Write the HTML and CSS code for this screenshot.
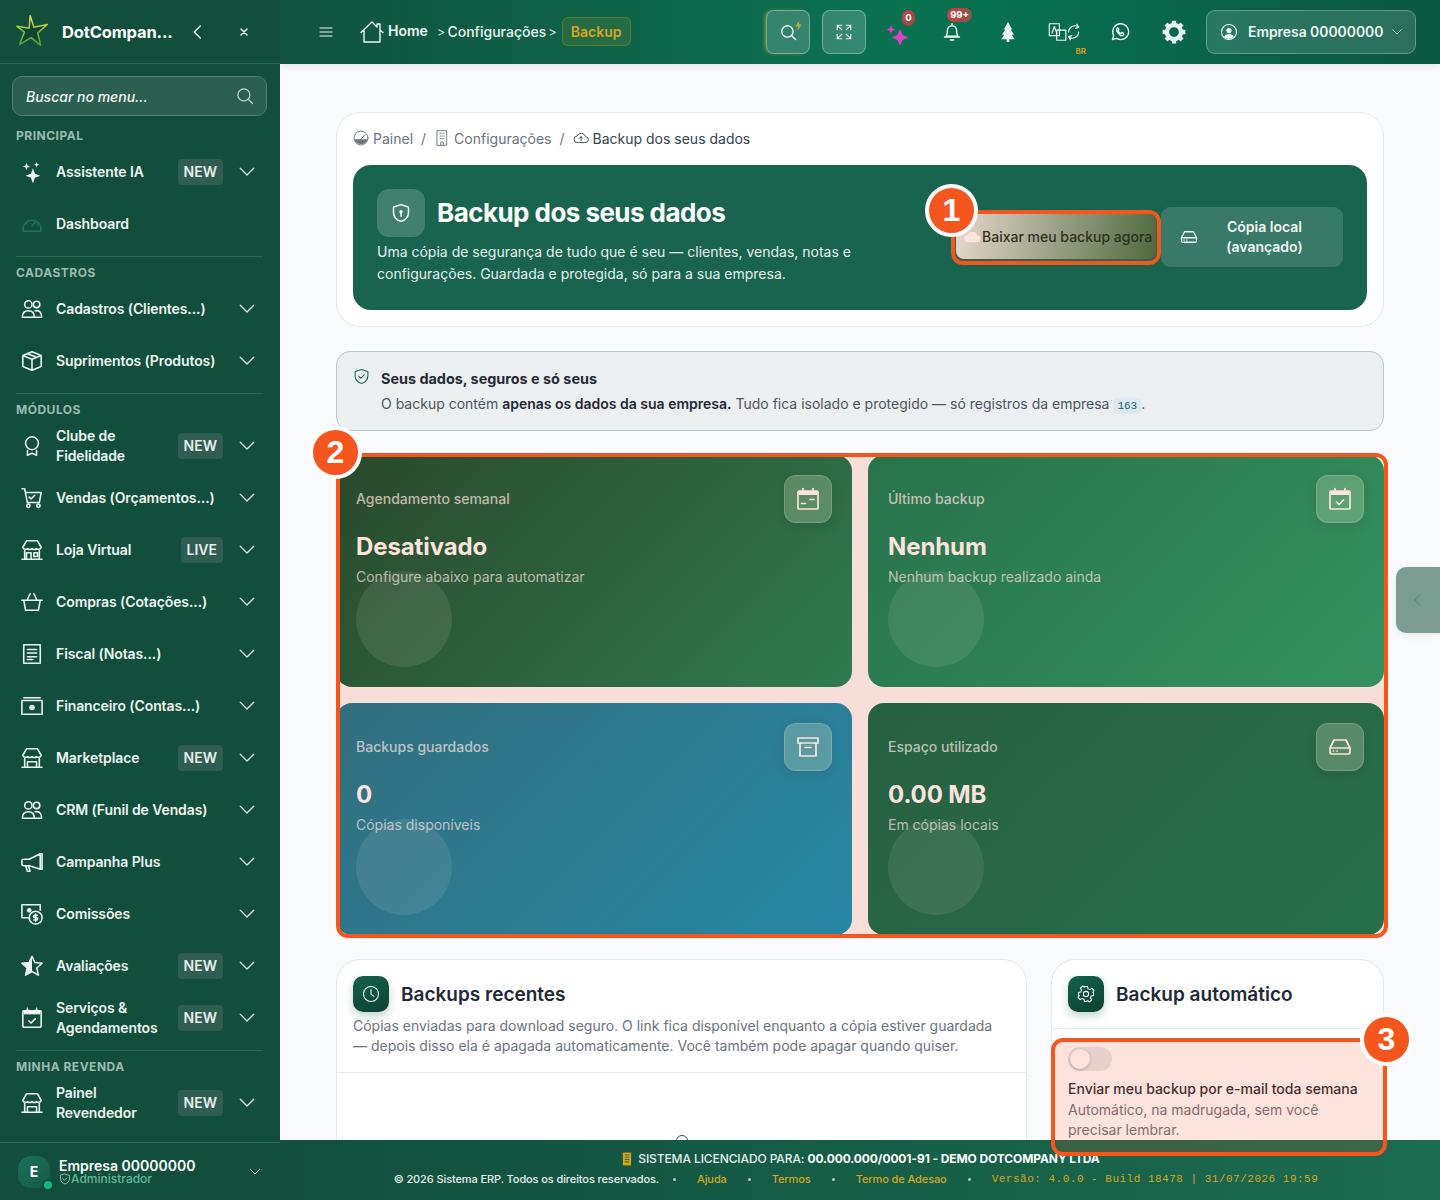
FILE: index.html
```html
<!DOCTYPE html>
<html lang="pt-BR">
<head>
  <meta charset="UTF-8">
  <title>Backup dos seus dados</title>
  <link rel="stylesheet" href="styles.css">
</head>
<body>
  <!-- icones usados no menu e nos cards -->
  <svg class="sprite" xmlns="http://www.w3.org/2000/svg">
    <symbol id="i-chev" viewBox="0 0 24 24"><path d="M3 7l9 9 9-9"/></symbol>
    <symbol id="i-spark" viewBox="0 0 24 24"><path class="solid" d="M13 8l2.200 6 5.800 2.200-5.800 2.200L13 24.500l-2.200-6.100L5 16.200l5.800-2.200zM6 2l1 3 3 1-3 1-1 3-1-3-3-1 3-1zM17 1l.8 2.200L20 4l-2.200.8L17 7l-.8-2.200L14 4l2.200-.8z"/></symbol>
    <symbol id="i-gauge" viewBox="0 0 24 24"><path d="M2 18a10 10 0 1 1 20 0c0 1.500-1 2-2 2H4c-1 0-2-.5-2-2zM12 14l4-4M6 12h.1M9 8.500h.1M15 8h.1M18 13h.1"/></symbol>
    <symbol id="i-people" viewBox="0 0 24 24"><circle cx="8" cy="7" r="4"/><circle cx="17" cy="7" r="3.500"/><path d="M1.500 21c0-5 3-7 6.500-7s6.500 2 6.500 7zM15.500 14c4-1 7 1.500 7 7h-8"/></symbol>
    <symbol id="i-box" viewBox="0 0 24 24"><path d="M12 2l10 4v12l-10 4-10-4V6zM2 6l10 4 10-4M12 10v12M7 4l10 4"/></symbol>
    <symbol id="i-award" viewBox="0 0 24 24"><circle cx="12" cy="9" r="7"/><path d="M7 17v5l5-2 5 2v-5"/></symbol>
    <symbol id="i-cart" viewBox="0 0 24 24"><path d="M1 2h3l3 15h13l2-11H5M9 11l2 2 4-4"/><circle cx="8" cy="20.500" r="1.800"/><circle cx="19" cy="20.500" r="1.800"/></symbol>
    <symbol id="i-shopwin" viewBox="0 0 24 24"><path d="M6 2h12l4 7a3 3 0 0 1-5 1.500 3.500 3.500 0 0 1-5 0 3.500 3.500 0 0 1-5 0A3 3 0 0 1 2 9zM4 12v10h16V12M1 22h22M6 15h5v7H6zM14 15h4v4h-4z"/></symbol>
    <symbol id="i-basket" viewBox="0 0 24 24"><path d="M1 10h22M3 10l2 11h14l2-11M7 9l3-6M17 9l-3-6"/></symbol>
    <symbol id="i-receipt" viewBox="0 0 24 24"><path d="M3 2h18v20H3zM7 7h10M7 11h10M7 15h10M7 18h6"/></symbol>
    <symbol id="i-cash" viewBox="0 0 24 24"><path d="M3 3h18M1 6h22v15H1z"/><circle class="solid" cx="12" cy="13.500" r="3"/></symbol>
    <symbol id="i-shop" viewBox="0 0 24 24"><path d="M6 2h12l4 7a3 3 0 0 1-5 1.500 3.500 3.500 0 0 1-5 0 3.500 3.500 0 0 1-5 0A3 3 0 0 1 2 9zM4 12v10h16V12M1 22h22M7 16h10v6H7z"/></symbol>
    <symbol id="i-mega" viewBox="0 0 24 24"><path d="M21 3v17L9 16H3a2 2 0 0 1-2-2v-3a2 2 0 0 1 2-2h6zM21 3h2v17h-2M5 16l2 6h3l-2-6"/></symbol>
    <symbol id="i-coin" viewBox="0 0 24 24"><path d="M9 16H1V2h20v6"/><circle class="solid" cx="9" cy="8" r="2.500"/><circle cx="16" cy="16" r="7"/><path d="M18 13.500h-3a1.200 1.200 0 0 0 0 2.500h2a1.200 1.200 0 0 1 0 2.500h-3M16 12v8"/></symbol>
    <symbol id="i-star" viewBox="0 0 24 24"><path d="M12 1.500l3.200 6.700L23 9l-5.800 5.200L19 22l-7-4-7 4 1.800-7.800L1 9l7.800-.8z"/><path class="solid" d="M12 1.500v16.500l-7 4 1.800-7.800L1 9l7.800-.8z"/></symbol>
    <symbol id="i-calcheck" viewBox="0 0 24 24"><path d="M3 4h18a1 1 0 0 1 1 1v16a1 1 0 0 1-1 1H3a1 1 0 0 1-1-1V5a1 1 0 0 1 1-1zM7 1.500V4M17 1.500V4M8.500 15l2.500 2.500 4.500-4.500"/><path class="solid" d="M3 4h18v4H3z"/></symbol>
    <symbol id="i-caldots" viewBox="0 0 24 24"><path d="M3 4h18a1 1 0 0 1 1 1v16a1 1 0 0 1-1 1H3a1 1 0 0 1-1-1V5a1 1 0 0 1 1-1zM7 1.500V4M17 1.500V4M5.500 16.500h4M14 12.500h4"/><path class="solid" d="M3 4h18v4H3z"/></symbol>
    <symbol id="i-archive" viewBox="0 0 24 24"><path d="M2 3h20v5H2zM4 8v13h16V8M9 12.500h6"/></symbol>
    <symbol id="i-drive" viewBox="0 0 24 24"><path d="M6 5h12l4 8v4a2 2 0 0 1-2 2H4a2 2 0 0 1-2-2v-4zM2 13h20M5.500 16h.1M9 16h.1"/></symbol>
    <symbol id="i-search" viewBox="0 0 24 24"><circle cx="10.500" cy="10.500" r="8"/><path d="M16.500 16.500L22 22"/></symbol>
    <symbol id="i-shield" viewBox="0 0 24 24"><path d="M12 2l9 3v6c0 6-4 9.500-9 11-5-1.500-9-5-9-11V5zM8 11.500l3 3 5-5"/></symbol>
    <symbol id="i-clock" viewBox="0 0 24 24"><circle cx="12" cy="12" r="10"/><path d="M12 6v6.500l4 2.500"/></symbol>
    <symbol id="i-gear" viewBox="0 0 24 24"><circle cx="12" cy="12" r="3.500"/><path d="M10 2h4l.7 3 2.500 1.100 2.600-1.600 2.800 2.800-1.600 2.600L22 10v4l-3 .7-1 2.500 1.600 2.600-2.800 2.800-2.600-1.600-2.100.9L10 22l-.7-3-2.500-1.100-2.600 1.600-2.800-2.800 1.600-2.600L2 14V10l3-.7 1.100-2.500-1.600-2.600 2.800-2.800 2.600 1.600z"/></symbol>
  </svg>

  <div class="app">
    <aside class="sidebar">
      <div class="side-head">
        <svg class="logo" viewBox="0 0 40 40">
          <defs>
            <linearGradient id="starGrad" x1="0" y1="0" x2="0" y2="1">
              <stop offset="0" stop-color="#e8e23a"/>
              <stop offset="1" stop-color="#4f9a3a"/>
            </linearGradient>
          </defs>
          <path d="M17 3l4 12 14-3-10 9 3 13-10-8-12 7 5-13L3 14l13 2z" fill="#0f4434" stroke="url(#starGrad)" stroke-width="1.600"/>
        </svg>
        <span class="brand">DotCompan...</span>
        <svg class="head-btn" viewBox="0 0 24 24"><path d="M15 4l-8 8 8 8"/></svg>
        <svg class="head-close" viewBox="0 0 24 24"><path d="M6 6l12 12M18 6L6 18"/></svg>
      </div>

      <div class="side-search">
        <span>Buscar no menu...</span>
        <svg class="ico"><use href="#i-search"/></svg>
      </div>

      <nav class="menu">
        <div class="menu-label">PRINCIPAL</div>
        <a class="item"><svg class="ico"><use href="#i-spark"/></svg><span class="name">Assistente IA</span><b class="tag">NEW</b><svg class="chev"><use href="#i-chev"/></svg></a>
        <a class="item"><svg class="ico dim"><use href="#i-gauge"/></svg><span class="name">Dashboard</span></a>

        <div class="menu-sep"></div>
        <div class="menu-label">CADASTROS</div>
        <a class="item"><svg class="ico"><use href="#i-people"/></svg><span class="name">Cadastros (Clientes...)</span><svg class="chev"><use href="#i-chev"/></svg></a>
        <a class="item"><svg class="ico"><use href="#i-box"/></svg><span class="name">Suprimentos (Produtos)</span><svg class="chev"><use href="#i-chev"/></svg></a>

        <div class="menu-sep"></div>
        <div class="menu-label">MÓDULOS</div>
        <a class="item"><svg class="ico"><use href="#i-award"/></svg><span class="name">Clube de<br>Fidelidade</span><b class="tag">NEW</b><svg class="chev"><use href="#i-chev"/></svg></a>
        <a class="item"><svg class="ico"><use href="#i-cart"/></svg><span class="name">Vendas (Orçamentos...)</span><svg class="chev"><use href="#i-chev"/></svg></a>
        <a class="item"><svg class="ico"><use href="#i-shopwin"/></svg><span class="name">Loja Virtual</span><b class="tag">LIVE</b><svg class="chev"><use href="#i-chev"/></svg></a>
        <a class="item"><svg class="ico"><use href="#i-basket"/></svg><span class="name">Compras (Cotações...)</span><svg class="chev"><use href="#i-chev"/></svg></a>
        <a class="item"><svg class="ico"><use href="#i-receipt"/></svg><span class="name">Fiscal (Notas...)</span><svg class="chev"><use href="#i-chev"/></svg></a>
        <a class="item"><svg class="ico"><use href="#i-cash"/></svg><span class="name">Financeiro (Contas...)</span><svg class="chev"><use href="#i-chev"/></svg></a>
        <a class="item"><svg class="ico"><use href="#i-shop"/></svg><span class="name">Marketplace</span><b class="tag">NEW</b><svg class="chev"><use href="#i-chev"/></svg></a>
        <a class="item"><svg class="ico"><use href="#i-people"/></svg><span class="name">CRM (Funil de Vendas)</span><svg class="chev"><use href="#i-chev"/></svg></a>
        <a class="item"><svg class="ico"><use href="#i-mega"/></svg><span class="name">Campanha Plus</span><svg class="chev"><use href="#i-chev"/></svg></a>
        <a class="item"><svg class="ico"><use href="#i-coin"/></svg><span class="name">Comissões</span><svg class="chev"><use href="#i-chev"/></svg></a>
        <a class="item"><svg class="ico"><use href="#i-star"/></svg><span class="name">Avaliações</span><b class="tag">NEW</b><svg class="chev"><use href="#i-chev"/></svg></a>
        <a class="item"><svg class="ico"><use href="#i-calcheck"/></svg><span class="name">Serviços &amp;<br>Agendamentos</span><b class="tag">NEW</b><svg class="chev"><use href="#i-chev"/></svg></a>

        <div class="menu-sep"></div>
        <div class="menu-label">MINHA REVENDA</div>
        <a class="item"><svg class="ico"><use href="#i-shop"/></svg><span class="name">Painel<br>Revendedor</span><b class="tag">NEW</b><svg class="chev"><use href="#i-chev"/></svg></a>
      </nav>

      <div class="side-user">
        <div class="avatar">E<i class="online"></i></div>
        <div class="user-info">
          <strong>Empresa 00000000</strong>
          <small><svg viewBox="0 0 24 24"><use href="#i-shield"/></svg>Administrador</small>
        </div>
        <svg class="user-chev"><use href="#i-chev"/></svg>
      </div>
    </aside>

    <div class="main">
      <header class="topbar">
        <svg class="burger" viewBox="0 0 24 24"><path d="M3 6h18M3 12h18M3 18h18"/></svg>
        <div class="crumbs">
          <svg class="home" viewBox="0 0 24 24"><path d="M1 12.500L12 2l5 5V4h3v6l3 2.500M4 10v12h16V10"/></svg>
          <span class="crumb-home">Home</span>
          <span class="sep sep-a">&gt;</span>
          <span class="crumb-cfg">Configurações</span>
          <span class="sep">&gt;</span>
          <span class="chip">Backup</span>
        </div>
        <div class="top-right">
          <button class="tbtn tbtn-search"><svg class="ico"><use href="#i-search"/></svg><svg class="bolt" viewBox="0 0 24 24"><path d="M14 1L5 14h6l-1 9 9-13h-6z"/></svg></button>
          <button class="tbtn"><svg class="expand" viewBox="0 0 24 24"><path d="M3 9V3h6M3 3l6 6M21 9V3h-6M21 3l-6 6M3 15v6h6M3 21l6-6M21 15v6h-6M21 21l-6-6"/></svg></button>
          <div class="cell cell-s"><svg class="pink" viewBox="0 0 24 24"><path d="M14 9l2.500 6 6 2.500-6 2.500-2.500 6-2.500-6-6-2.500 6-2.500zM5 5l1.300 3.200L9.500 9.500 6.300 10.800 5 14 3.700 10.800.5 9.500l3.200-1.300z"/></svg><b class="count count-a">0</b></div>
          <div class="cell"><svg class="line" viewBox="0 0 24 24"><path d="M5 17c1-1.500 1.500-3 1.500-7a5.500 5.500 0 0 1 11 0c0 4 .5 5.500 1.500 7zM3 18h18M10 21.500h4M12 2v2"/></svg><b class="count count-b">99+</b></div>
          <div class="cell"><svg class="fill" viewBox="0 0 24 24"><path d="M12 1l4.500 8H15l3.500 6H16l3.500 5h-6v3h-3v-3h-6L8 15H5.500L9 9H7.500z"/></svg></div>
          <div class="cell"><svg class="trans" viewBox="0 0 36 24"><path d="M2 3h11v13H2zM10 10h10v11H10z"/><path d="M5 13l2.500-7 2.500 7M34 12a7 7 0 0 1-11 5.500M23 12a7 7 0 0 1 11-5.500M32 3.500l2 3.500-3.500 1M25 20.500l-2-3.500 3.500-1"/></svg><span class="lang">BR</span></div>
          <div class="cell"><svg class="line" viewBox="0 0 24 24"><path d="M3 21l1.500-5A9.500 9.500 0 1 1 8 19.700zM9 7.500c-1.500 1-1.500 3 .5 5.500s4.500 4 6 3c1-.7 1.300-1.800.7-2.300l-1.700-1c-.5-.2-1 .8-1.500 1-1 .1-3-2-3.200-3 .2-.5 1-1 .8-1.500l-.7-1.700c-.2-.5-.5-.5-.9-.5z"/></svg></div>
          <div class="cell cell-s"><svg class="big-gear" viewBox="0 0 24 24"><circle cx="12" cy="12" r="6.500"/><path d="M12 1.500v4M12 18.500v4M1.500 12h4M18.500 12h4M4.600 4.600l2.800 2.800M16.600 16.600l2.800 2.800M19.400 4.600l-2.800 2.800M7.400 16.600l-2.800 2.800"/></svg></div>
          <button class="company">
            <svg class="line" viewBox="0 0 24 24"><circle cx="12" cy="12" r="10"/><circle class="solid" cx="12" cy="10" r="3.500"/><path class="solid" d="M5.500 18.500c1-3 3.500-4 6.500-4s5.500 1 6.500 4c-1.500 1.500-4 2.500-6.500 2.500s-5-1-6.500-2.500z"/></svg>
            <span>Empresa 00000000</span>
            <svg class="comp-chev"><use href="#i-chev"/></svg>
          </button>
        </div>
      </header>

      <main class="content">
        <section class="panel top-panel">
          <div class="path">
            <svg class="path-ico" viewBox="0 0 24 24"><circle cx="12" cy="12" r="10.500"/><path class="solid" d="M2 14h20a10.500 10.500 0 0 1-20 0z"/><path d="M12 14l5-6"/></svg>
            <span>Painel</span><em>/</em>
            <svg class="path-ico" viewBox="0 0 24 24"><path d="M5 1h14v22H5zM9 5h2M13 5h2M9 9h2M13 9h2M9 13h2M13 13h2M10 23v-5h4v5"/></svg>
            <span>Configurações</span><em>/</em>
            <svg class="path-ico cur" viewBox="0 0 24 24"><path d="M7 19a5 5 0 0 1-1-10 7 7 0 0 1 13 1 4.500 4.500 0 0 1-1 9zM12 16v-6M9.500 12.500L12 10l2.500 2.500"/></svg>
            <span class="cur">Backup dos seus dados</span>
          </div>
          <div class="hero">
            <div class="hero-text">
              <div class="hero-title">
                <div class="hero-ico"><svg viewBox="0 0 24 24"><path d="M12 2l9 3v6c0 6-4 9.500-9 11-5-1.500-9-5-9-11V5z"/><circle class="solid" cx="12" cy="10.500" r="2"/><path d="M12 12v4"/></svg></div>
                <h1>Backup dos seus dados</h1>
              </div>
              <p>Uma cópia de segurança de tudo que é seu — clientes, vendas, notas e configurações. Guardada e protegida, só para a sua empresa.</p>
            </div>
            <div class="hero-actions">
              <button class="btn-main"><svg viewBox="0 0 24 24"><path class="solid" d="M7 19a5 5 0 0 1-1-10 7 7 0 0 1 13 1 4.500 4.500 0 0 1-1 9z"/></svg>Baixar meu backup agora</button>
              <button class="btn-alt"><svg><use href="#i-drive"/></svg><span>Cópia local (avançado)</span></button>
            </div>
          </div>
        </section>

        <section class="notice">
          <svg viewBox="0 0 24 24"><use href="#i-shield"/></svg>
          <div>
            <h4>Seus dados, seguros e só seus</h4>
            <p>O backup contém <strong>apenas os dados da sua empresa.</strong> Tudo fica isolado e protegido — só registros da empresa <code>163</code>.</p>
          </div>
        </section>

        <section class="stats">
          <div class="stat stat-a">
            <span class="stat-label">Agendamento semanal</span>
            <strong>Desativado</strong>
            <small>Configure abaixo para automatizar</small>
            <div class="stat-ico"><svg><use href="#i-caldots"/></svg></div>
          </div>
          <div class="stat stat-b">
            <span class="stat-label">Último backup</span>
            <strong>Nenhum</strong>
            <small>Nenhum backup realizado ainda</small>
            <div class="stat-ico"><svg><use href="#i-calcheck"/></svg></div>
          </div>
          <div class="stat stat-c">
            <span class="stat-label">Backups guardados</span>
            <strong>0</strong>
            <small>Cópias disponíveis</small>
            <div class="stat-ico"><svg><use href="#i-archive"/></svg></div>
          </div>
          <div class="stat stat-d">
            <span class="stat-label">Espaço utilizado</span>
            <strong>0.00 MB</strong>
            <small>Em cópias locais</small>
            <div class="stat-ico"><svg><use href="#i-drive"/></svg></div>
          </div>
        </section>

        <section class="lower">
          <div class="panel recent">
            <div class="panel-head">
              <div class="panel-ico"><svg><use href="#i-clock"/></svg></div>
              <h3>Backups recentes</h3>
            </div>
            <p class="panel-desc">Cópias enviadas para download seguro. O link fica disponível enquanto a cópia estiver guardada — depois disso ela é apagada automaticamente. Você também pode apagar quando quiser.</p>
            <div class="empty"><i></i></div>
          </div>
          <div class="panel auto">
            <div class="panel-head auto-head">
              <div class="panel-ico"><svg><use href="#i-gear"/></svg></div>
              <h3>Backup automático</h3>
            </div>
            <div class="auto-body">
              <div class="toggle"><i></i></div>
              <div class="auto-title">Enviar meu backup por e-mail toda semana</div>
              <div class="auto-sub">Automático, na madrugada, sem você precisar lembrar.</div>
            </div>
          </div>
        </section>
      </main>

      <footer class="foot">
        <div class="foot-line">
          <svg viewBox="0 0 24 24"><path class="solid" d="M5 1h14v22H5z"/><path class="holes" d="M9 5h2M13 5h2M9 9h2M13 9h2M9 13h2M13 13h2M9 17h6"/></svg>
          <span>SISTEMA LICENCIADO PARA: <strong>00.000.000/0001-91 - DEMO DOTCOMPANY LTDA</strong></span>
        </div>
        <div class="foot-sub">
          <span class="copy">© 2026 Sistema ERP. Todos os direitos reservados.</span><i></i>
          <a>Ajuda</a><i></i>
          <a>Termos</a><i></i>
          <a>Termo de Adesao</a><i></i>
          <code>Versão: 4.0.0 - Build 18478 | 31/07/2026 19:59</code>
        </div>
      </footer>
    </div>

    <!-- aba lateral e marcacoes por cima da tela -->
    <div class="side-tab"><svg viewBox="0 0 24 24"><path d="M15 4l-8 8 8 8"/></svg></div>
    <div class="mark mark-1"></div>
    <div class="mark mark-2"></div>
    <div class="mark mark-3"></div>
    <div class="pin pin-1">1</div>
    <div class="pin pin-2">2</div>
    <div class="pin pin-3">3</div>
  </div>
</body>
</html>
```

FILE: styles.css
```css
/* Base */
* {
  box-sizing: border-box;
  margin: 0;
  padding: 0;
}
body {
  font-family: Inter, "Liberation Sans", sans-serif;
  background: #f8fafc;
  color: #1f2937;
}
svg {
  fill: none;
  stroke: currentColor;
  stroke-width: 1.7;
  stroke-linecap: round;
  stroke-linejoin: round;
}
.solid {
  fill: currentColor;
  stroke: none;
}
.sprite {
  display: none;
}
.app {
  position: relative;
  display: grid;
  grid-template-columns: 280px 1fr;
  height: 1200px;
  overflow: hidden;
}

/* Sidebar */
.sidebar {
  display: flex;
  flex-direction: column;
  background: #114f3c;
  color: #eef5f1;
  z-index: 3;
}
.side-head {
  display: flex;
  align-items: center;
  height: 64px;
  padding-left: 14px;
  border-bottom: 1px solid rgba(255, 255, 255, 0.12);
}
.logo {
  width: 38px;
  height: 38px;
  stroke: none;
}
.brand {
  margin-left: 10px;
  width: 122px;
  font-size: 16.5px;
  font-weight: 700;
  letter-spacing: -0.15px;
  color: #fff;
}
.head-btn {
  width: 18px;
  height: 18px;
  stroke-width: 2;
  margin-left: 5px;
}
.head-close {
  width: 12px;
  height: 12px;
  stroke-width: 3;
  margin-left: 31px;
}
.side-search {
  display: flex;
  align-items: center;
  justify-content: space-between;
  height: 40px;
  margin: 12px 13px 4px 12px;
  padding: 0 12px 0 13px;
  background: #2b5f4f;
  border: 1px solid #53806f;
  border-radius: 10px;
  font-size: 14px;
  font-style: italic;
  font-weight: 500;
  color: #f2f7f4;
}
.side-search .ico {
  width: 18px;
  height: 18px;
  color: #c0d4cc;
}
.menu {
  flex: 1;
  padding-top: 6px;
}
.menu-label {
  padding: 1px 16px 0;
  height: 20px;
  font-size: 12px;
  line-height: 18px;
  font-weight: 700;
  letter-spacing: 0.5px;
  color: #9dbaae;
}
.menu-sep {
  height: 1px;
  margin: 6px 17px 6px 16px;
  background: rgba(255, 255, 255, 0.13);
}
.item {
  display: flex;
  align-items: center;
  height: 52px;
  padding: 0 24px 0 21px;
}
.ico {
  flex: none;
  width: 22px;
  height: 22px;
}
.ico.dim {
  color: #24705a;
}
.name {
  flex: 1;
  margin-left: 13px;
  font-size: 14px;
  line-height: 20px;
  font-weight: 600;
  letter-spacing: -0.1px;
  color: #eef5f1;
}
.tag {
  padding: 0 6px;
  height: 26px;
  line-height: 26px;
  background: #2f5d51;
  border-radius: 4px;
  font-size: 14px;
  font-weight: 600;
  color: #e6efeb;
}
.chev {
  flex: none;
  width: 18px;
  height: 18px;
  margin-left: 15px;
  stroke-width: 1.8;
  color: #d7e4de;
}
.side-user {
  display: flex;
  align-items: center;
  height: 58px;
  padding: 0 19px 0 18px;
  border-top: 1px solid rgba(255, 255, 255, 0.16);
}
.avatar {
  position: relative;
  width: 32px;
  height: 32px;
  border-radius: 13px;
  background: linear-gradient(135deg, #1d7158, #145a45);
  color: #fff;
  font-size: 14px;
  font-weight: 700;
  line-height: 32px;
  text-align: center;
}
.online {
  position: absolute;
  right: -2px;
  bottom: -1px;
  width: 8px;
  height: 8px;
  border-radius: 50%;
  background: #10b981;
  box-shadow: 0 0 0 2px #114f3c;
}
.user-info {
  flex: 1;
  margin-left: 9px;
}
.user-info strong {
  display: block;
  font-size: 14px;
  line-height: 14px;
  font-weight: 600;
  color: #fff;
}
.user-info small {
  display: flex;
  align-items: center;
  font-size: 12px;
  line-height: 12px;
  font-weight: 500;
  color: #63b898;
}
.user-info small svg {
  width: 12px;
  height: 12px;
  color: #a8cfc0;
}
.user-chev {
  width: 12px;
  height: 12px;
  stroke-width: 2;
}

/* Topo */
.main {
  display: flex;
  flex-direction: column;
  min-width: 0;
  height: 1200px;
}
.topbar {
  flex: none;
  display: flex;
  align-items: center;
  height: 64px;
  padding: 0 24px 0 38px;
  background: linear-gradient(90deg, #11533f 0%, #0a7050 50%, #07704f 62%, #0c5843 100%);
  color: #eef7f3;
  box-shadow: 0 2px 8px rgba(0, 0, 0, 0.1);
  z-index: 2;
}
.burger {
  width: 16px;
  height: 16px;
  stroke-width: 1.5;
}
.crumbs {
  display: flex;
  align-items: center;
  margin-left: 26px;
  margin-top: -1px;
  font-size: 14px;
  font-weight: 600;
}
.home {
  width: 24px;
  height: 24px;
  margin-right: 4px;
  stroke-width: 1.4;
}
.crumb-home {
  margin-top: -2px;
}
.crumb-cfg {
  font-weight: 500;
}
.sep {
  margin: 0 5px 0 2px;
  font-size: 13px;
  font-weight: 400;
  opacity: 0.85;
}
.sep-a {
  margin: 0 2px 0 9px;
}
.chip {
  padding: 0 8px;
  height: 29px;
  line-height: 27px;
  color: #d6a51f;
  background: rgba(214, 165, 31, 0.12);
  border: 1px solid rgba(214, 165, 31, 0.28);
  border-radius: 6px;
}
.top-right {
  display: flex;
  align-items: center;
  gap: 12px;
  margin-left: auto;
}
.tbtn {
  position: relative;
  display: flex;
  align-items: center;
  justify-content: center;
  width: 44px;
  height: 44px;
  background: rgba(255, 255, 255, 0.17);
  border: 1px solid rgba(255, 255, 255, 0.32);
  border-radius: 8px;
  color: #eef7f3;
}
.tbtn .ico {
  width: 17px;
  height: 17px;
  stroke-width: 2;
}
.tbtn-search {
  box-shadow: -2px 0 3px rgba(214, 180, 60, 0.4);
}
.bolt {
  position: absolute;
  top: 9px;
  right: 5px;
  width: 11px;
  height: 11px;
  fill: #c4a73a;
  stroke: none;
}
.expand {
  width: 18px;
  height: 18px;
  stroke-width: 1.5;
}
.cell {
  position: relative;
  display: flex;
  align-items: center;
  justify-content: center;
  width: 44px;
  height: 44px;
}
.cell-s {
  width: 40px;
}
.pink {
  width: 24px;
  height: 26px;
  fill: #dd3fc8;
  stroke: none;
}
.line {
  width: 20px;
  height: 20px;
}
.fill {
  width: 22px;
  height: 22px;
  fill: #e8f4ef;
  stroke: none;
}
.trans {
  width: 34px;
  height: 22px;
  stroke-width: 1.3;
}
.lang {
  position: absolute;
  right: 0;
  bottom: -2px;
  font-size: 8px;
  font-weight: 600;
  color: #d6a51f;
}
.big-gear {
  width: 26px;
  height: 26px;
  stroke: #e8f4ef;
  stroke-width: 4;
  stroke-linecap: butt;
}
.count {
  position: absolute;
  color: #fff;
  font-size: 9.5px;
  font-weight: 700;
  border-radius: 8px;
  text-align: center;
}
.count-a {
  top: 0;
  right: 3px;
  width: 13px;
  height: 16px;
  line-height: 16px;
  background: linear-gradient(135deg, #c94343, #8a4a45);
}
.count-b {
  top: -2px;
  right: 2px;
  padding: 0 3px;
  height: 14px;
  line-height: 14px;
  background: linear-gradient(90deg, #d13f3f, #7d5a4b);
}
.company {
  display: flex;
  align-items: center;
  width: 210px;
  height: 44px;
  padding: 0 12px 1px 13px;
  background: rgba(255, 255, 255, 0.13);
  border: 1px solid rgba(255, 255, 255, 0.28);
  border-radius: 9px;
  color: #eef7f3;
  font: 600 13.9px Inter, "Liberation Sans", sans-serif;
}
.company .line {
  width: 18px;
  height: 18px;
  stroke-width: 1.5;
}
.company span {
  flex: 1;
  margin-left: 10px;
  text-align: left;
  white-space: nowrap;
}
.comp-chev {
  width: 12px;
  height: 12px;
  color: #bcd3ca;
}

/* Conteudo */
.content {
  flex: 1;
  min-height: 0;
  overflow: hidden;
  padding: 48px 56px 0;
}
.panel {
  background: #fff;
  border: 1px solid #e5e7eb;
  border-radius: 24px;
}
.top-panel {
  padding: 15px 16px 16px;
}
.path {
  display: flex;
  align-items: center;
  height: 20px;
  font-size: 14px;
  color: #6b7280;
}
.path-ico {
  width: 16px;
  height: 16px;
  margin-right: 4px;
  stroke-width: 1.4;
}
.path em {
  margin: 0 8px;
  font-style: normal;
}
.path .cur {
  color: #374151;
}
.hero {
  display: flex;
  align-items: center;
  justify-content: space-between;
  height: 145px;
  margin-top: 17px;
  padding: 22px 24px 24px;
  background: #18644e;
  border-radius: 18px;
  color: #fff;
}
.hero-text {
  width: 490px;
}
.hero-title {
  display: flex;
  align-items: center;
  gap: 12px;
}
.hero-ico {
  display: flex;
  align-items: center;
  justify-content: center;
  width: 48px;
  height: 48px;
  background: rgba(255, 255, 255, 0.18);
  border-radius: 12px;
}
.hero-ico svg {
  width: 20px;
  height: 20px;
}
.hero h1 {
  font-size: 26px;
  font-weight: 700;
  letter-spacing: -0.55px;
}
.hero p {
  margin-top: 4px;
  font-size: 14px;
  line-height: 22px;
  color: #e6f0ec;
}
.hero-actions {
  display: flex;
  align-items: center;
  gap: 5px;
}
.btn-main {
  display: flex;
  align-items: center;
  width: 200px;
  height: 45px;
  padding-left: 7px;
  background: linear-gradient(100deg, #e3f2ed, #306f45);
  border: 0;
  border-radius: 8px;
  font: 500 14px Inter, "Liberation Sans", sans-serif;
  color: #0a2a22;
  white-space: nowrap;
}
.btn-main svg {
  width: 18px;
  height: 18px;
  margin-right: 1px;
  color: #fff;
}
.btn-alt {
  display: flex;
  align-items: center;
  width: 182px;
  height: 60px;
  padding: 0 24px 0 19px;
  background: rgba(255, 255, 255, 0.14);
  border: 0;
  border-radius: 9px;
  font: 600 14px/20px Inter, "Liberation Sans", sans-serif;
  color: #eef7f3;
}
.btn-alt svg {
  width: 18px;
  height: 18px;
  flex: none;
}
.btn-alt span {
  flex: 1;
  padding: 0 8px 0 20px;
  text-align: center;
}
.notice {
  display: flex;
  gap: 11px;
  height: 80px;
  margin-top: 24px;
  padding: 15px 16px;
  background: #ebeff0;
  border: 1px solid #b7cbc6;
  border-radius: 14px;
}
.notice > svg {
  flex: none;
  width: 17px;
  height: 19px;
  color: #1a6a52;
  stroke-width: 1.5;
}
.notice h4 {
  margin-top: 3px;
  font-size: 14.4px;
  font-weight: 700;
  color: #1f2937;
}
.notice p {
  margin-top: 8px;
  font-size: 14px;
  color: #4b5563;
}
.notice strong {
  font-weight: 600;
  color: #1f2937;
}
code {
  font-family: "Liberation Mono", monospace;
}
.notice code {
  padding: 2px 4px;
  background: #dde8f1;
  border-radius: 4px;
  font-size: 11px;
  color: #155e75;
}

/* Cards de numeros */
.stats {
  display: grid;
  grid-template-columns: 1fr 1fr;
  gap: 16px;
  margin-top: 24px;
}
.stat {
  position: relative;
  display: flex;
  flex-direction: column;
  height: 232px;
  padding: 20px;
  overflow: hidden;
  border-radius: 16px;
  color: #fff;
}
.stat::after {
  content: "";
  position: absolute;
  left: 20px;
  bottom: 20px;
  width: 96px;
  height: 96px;
  border-radius: 50%;
  background: rgba(255, 255, 255, 0.1);
}
.stat-a {
  background: linear-gradient(135deg, #04472f, #0a8359);
}
.stat-b {
  background: linear-gradient(135deg, #027955, #109f6b);
}
.stat-c {
  background: linear-gradient(135deg, #0d7590, #0092c0);
}
.stat-d {
  background: linear-gradient(135deg, #00644a, #007554);
}
.stat-label {
  margin-top: 15px;
  font-size: 14px;
  line-height: 18px;
  font-weight: 500;
  color: rgba(255, 255, 255, 0.72);
}
.stat strong {
  margin-top: 23px;
  font-size: 24px;
  line-height: 32px;
  font-weight: 700;
  letter-spacing: -0.1px;
}
.stat small {
  margin-top: 5px;
  font-size: 14px;
  line-height: 18px;
  color: rgba(255, 255, 255, 0.7);
}
.stat-ico {
  position: absolute;
  top: 20px;
  right: 20px;
  display: flex;
  align-items: center;
  justify-content: center;
  width: 48px;
  height: 48px;
  background: rgba(210, 255, 215, 0.28);
  border: 1px solid rgba(255, 255, 255, 0.2);
  border-radius: 12px;
  box-shadow: 0 4px 12px rgba(0, 0, 0, 0.1);
}
.stat-ico svg {
  width: 24px;
  height: 24px;
}

/* Paineis de baixo */
.lower {
  display: grid;
  grid-template-columns: 691px 333px;
  gap: 24px;
  margin-top: 24px;
}
.lower .panel {
  height: 300px;
}
.panel-head {
  display: flex;
  align-items: center;
  gap: 12px;
  padding: 16px 16px 0;
}
.panel-ico {
  display: flex;
  align-items: center;
  justify-content: center;
  width: 36px;
  height: 36px;
  background: linear-gradient(160deg, #13634b, #0b4232);
  border-radius: 10px;
  color: #fff;
  box-shadow: 0 4px 8px rgba(17, 79, 60, 0.25);
}
.panel-ico svg {
  width: 18px;
  height: 18px;
  stroke-width: 1.4;
}
.panel-head h3 {
  font-size: 19px;
  font-weight: 600;
  color: #1f2937;
}
.panel-desc {
  padding: 4px 16px 16px;
  border-bottom: 1px solid #e5e7eb;
  font-size: 14px;
  line-height: 20px;
  color: #6b7280;
}
.empty {
  display: flex;
  justify-content: center;
  padding-top: 62px;
}
.empty i {
  width: 12px;
  height: 12px;
  border: 1.5px solid #374151;
  border-radius: 50%;
}
.auto-head {
  padding-bottom: 16px;
  border-bottom: 1px solid #e5e7eb;
}
.auto-body {
  padding: 18px 16px;
}
.toggle {
  width: 44px;
  height: 24px;
  background: #e5e7eb;
  border-radius: 12px;
  padding: 2px;
}
.toggle i {
  display: block;
  width: 20px;
  height: 20px;
  background: #fff;
  border-radius: 50%;
  box-shadow: 0 1px 3px rgba(0, 0, 0, 0.25);
}
.auto-title {
  margin-top: 8px;
  font-size: 14px;
  line-height: 20px;
  font-weight: 500;
  color: #1f2937;
}
.auto-sub {
  margin-top: 1px;
  font-size: 14px;
  line-height: 20px;
  color: #6b7280;
}

/* Rodape */
.foot {
  flex: none;
  height: 60px;
  padding-top: 10px;
  background: linear-gradient(90deg, #114f3c, #1b6c51);
  color: #e6efeb;
  z-index: 2;
}
.foot-line {
  display: flex;
  align-items: center;
  justify-content: center;
  height: 17px;
  font-size: 12px;
  font-weight: 500;
  letter-spacing: -0.1px;
}
.foot-line svg {
  width: 14px;
  height: 14px;
  margin-right: 4px;
  color: #d6a51f;
}
.foot-line .holes {
  stroke: #114f3c;
  stroke-width: 1.5;
}
.foot-line strong {
  font-weight: 700;
  color: #fff;
}
.foot-sub {
  display: flex;
  align-items: center;
  justify-content: center;
  gap: 21px;
  margin-top: 5px;
  padding-right: 8px;
  font-size: 11px;
  font-weight: 500;
  letter-spacing: -0.1px;
}
.foot-sub .copy {
  margin-right: -7px;
}
.foot-sub i {
  width: 3px;
  height: 3px;
  border-radius: 50%;
  background: #b6cbc2;
}
.foot-sub a {
  color: #d6a51f;
}
.foot-sub code {
  font-size: 11px;
  letter-spacing: 0.5px;
  color: #d6a51f;
}

/* Elementos por cima da tela */
.side-tab {
  position: absolute;
  top: 567px;
  right: 0;
  display: flex;
  align-items: center;
  padding-left: 14px;
  width: 44px;
  height: 66px;
  background: #7b9c91;
  border-radius: 10px 0 0 10px;
  color: #6c8a80;
  box-shadow: 0 2px 8px rgba(0, 0, 0, 0.08);
}
.side-tab svg {
  width: 16px;
  height: 16px;
}
.mark {
  position: absolute;
  border: 4px solid #f4561e;
  background: rgba(244, 81, 30, 0.16);
  border-radius: 12px;
  z-index: 5;
}
.mark-1 {
  left: 951px;
  top: 210px;
  width: 210px;
  height: 55px;
}
.mark-2 {
  left: 336px;
  top: 453px;
  width: 1052px;
  height: 485px;
}
.mark-3 {
  left: 1051px;
  top: 1038px;
  width: 336px;
  height: 118px;
}
.pin {
  position: absolute;
  width: 53px;
  height: 53px;
  background: #f4561e;
  border: 4px solid #fff;
  border-radius: 50%;
  color: #fff;
  font: 700 32px/45px "Liberation Sans", sans-serif;
  text-align: center;
  z-index: 6;
}
.pin-1 {
  left: 925px;
  top: 184px;
}
.pin-2 {
  left: 309px;
  top: 426px;
}
.pin-3 {
  left: 1360px;
  top: 1013px;
}
```
